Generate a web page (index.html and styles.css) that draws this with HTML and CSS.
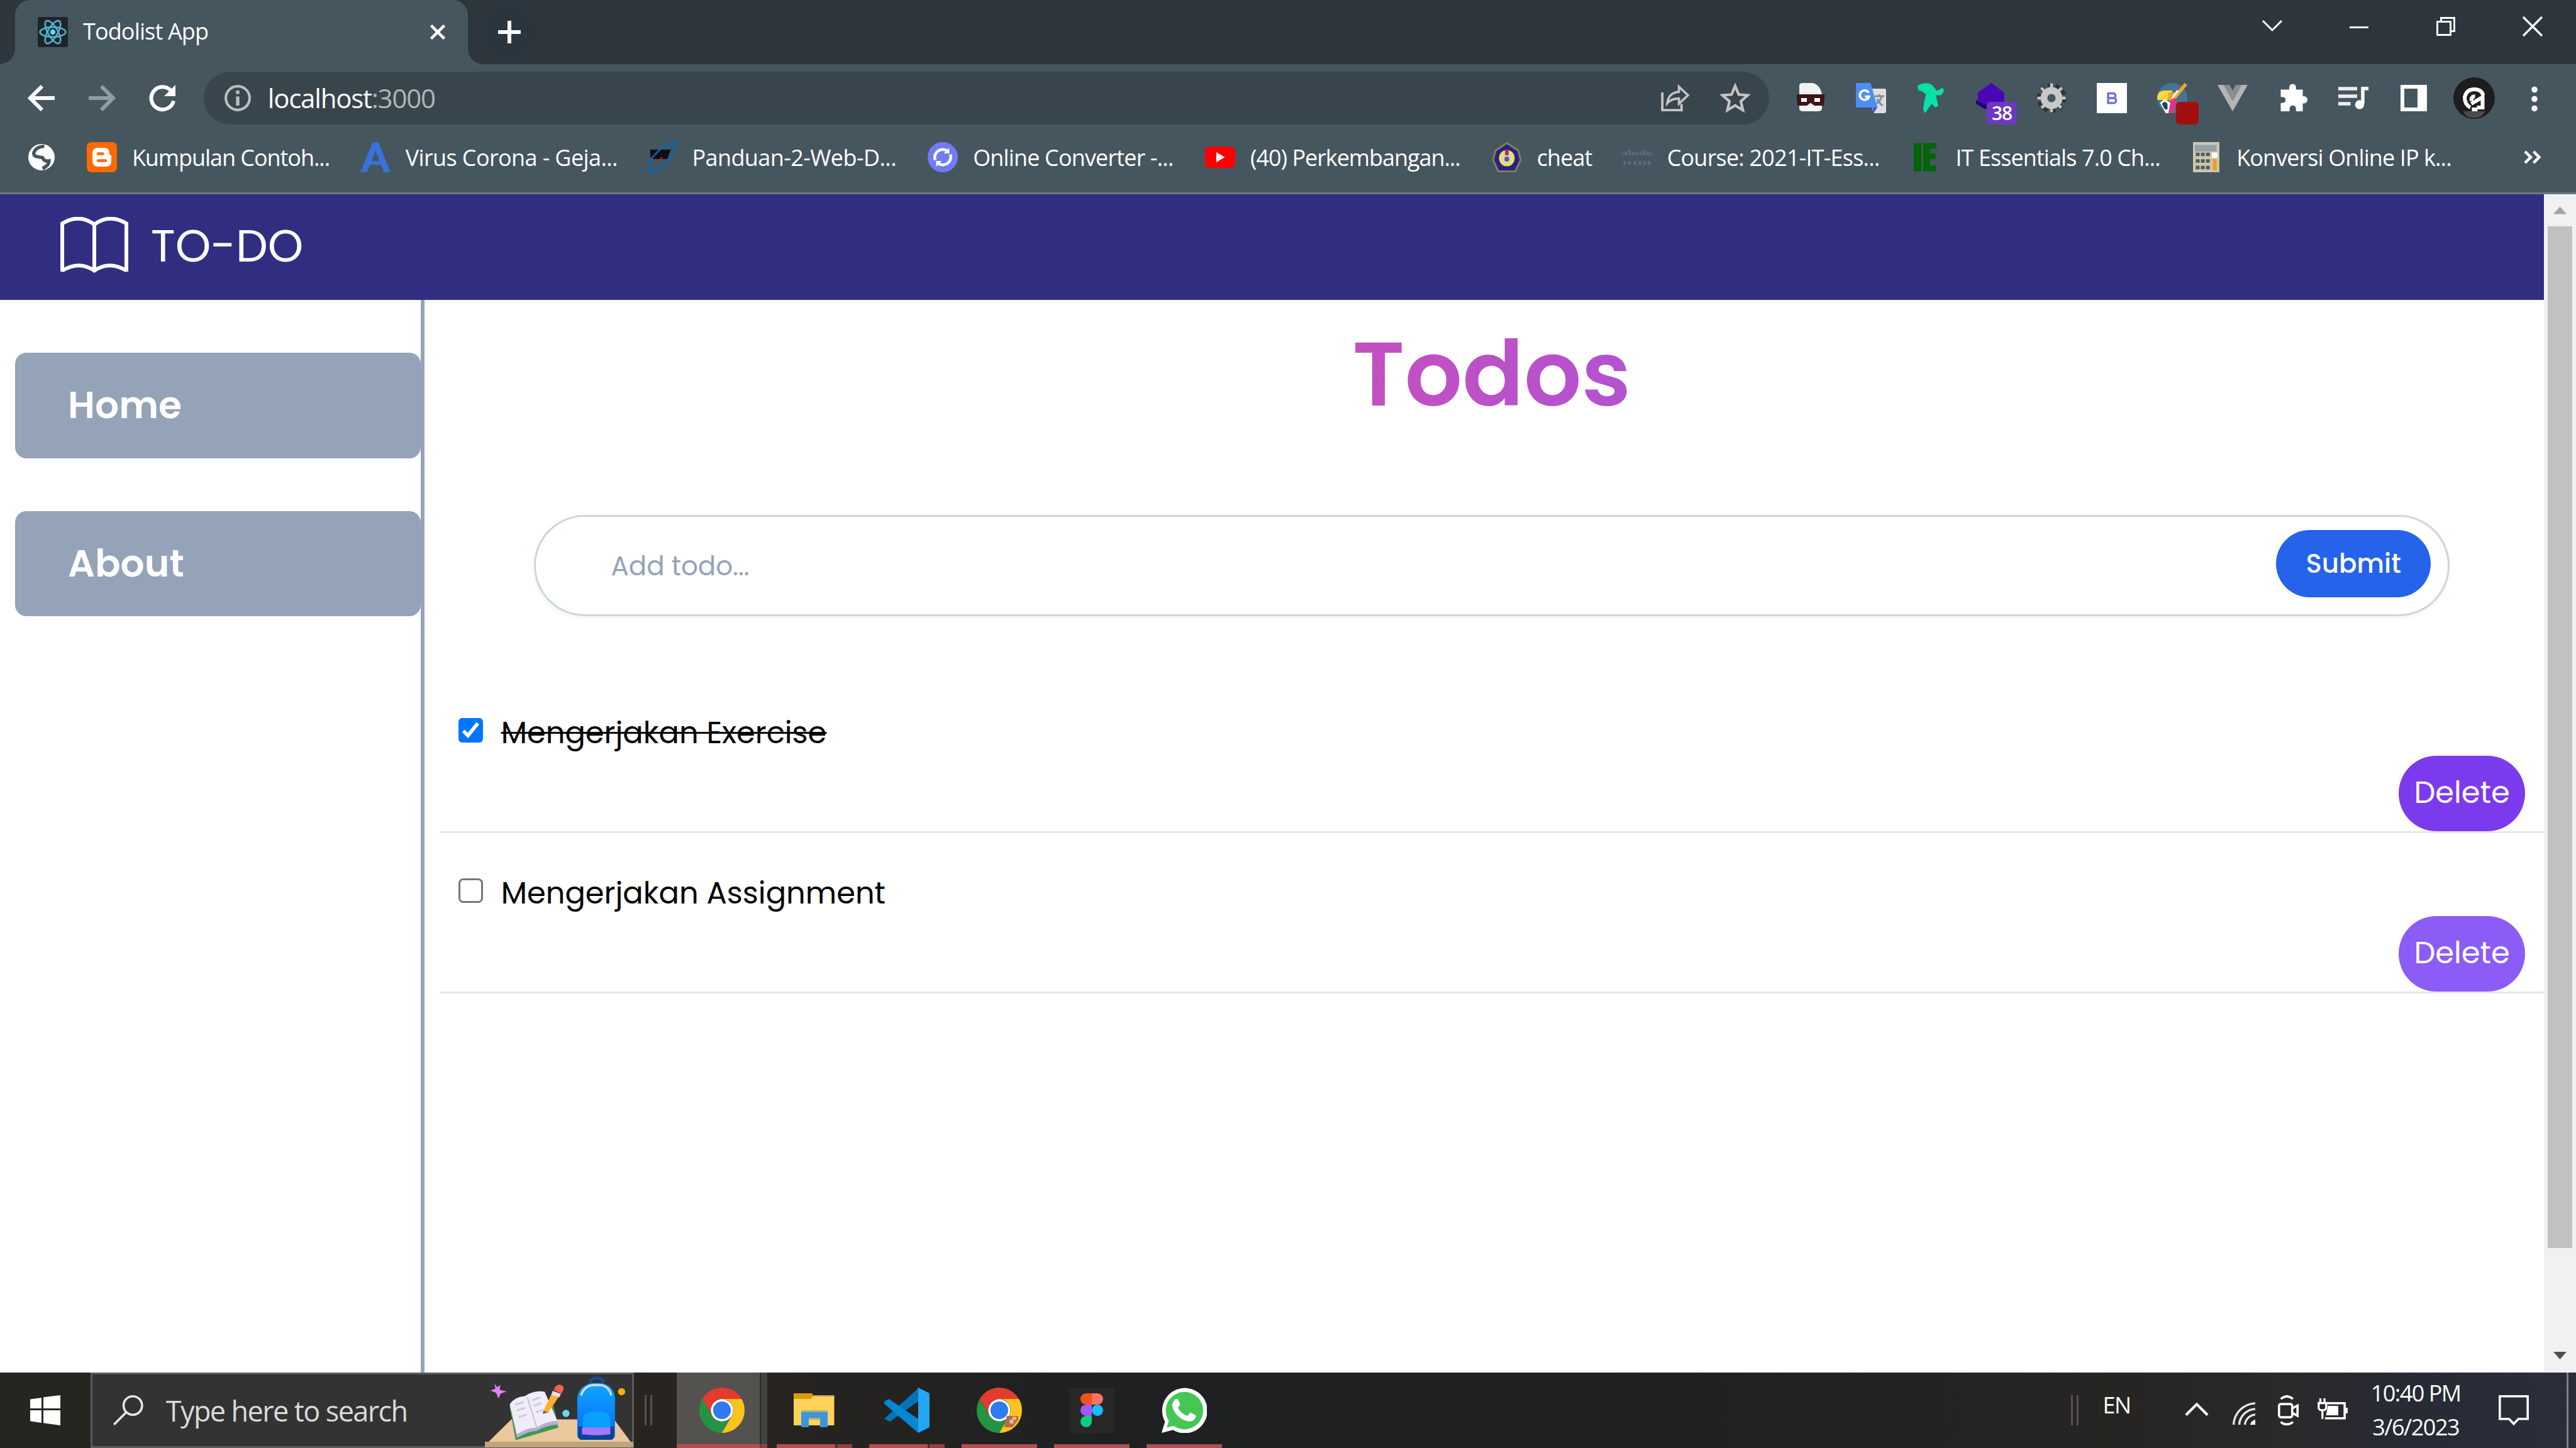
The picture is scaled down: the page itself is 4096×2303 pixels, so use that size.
FILE: index.html
```html
<!DOCTYPE html>
<html lang="en">
<head>
<meta charset="utf-8">
<title>Todolist App</title>
<link rel="stylesheet" href="styles.css">
</head>
<body>
<header class="tabstrip">
  <div class="tab">
    <svg class="i16" viewBox="0 0 16 16"><rect width="16" height="16" rx=".8" fill="#20232a"/><g fill="none" stroke="#4fb3cc" stroke-width=".9"><ellipse cx="8" cy="8" rx="6.8" ry="2.6"/><ellipse cx="8" cy="8" rx="6.8" ry="2.6" transform="rotate(60 8 8)"/><ellipse cx="8" cy="8" rx="6.8" ry="2.6" transform="rotate(120 8 8)"/></g><circle cx="8" cy="8" r="1.4" fill="#61dafb"/></svg>
    <span class="tab-title">Todolist App</span>
    <svg class="tab-close" viewBox="0 0 8 8"><path d="M.5.5l7 7M7.5.5l-7 7" stroke="#fff" stroke-width="1.5"/></svg>
  </div>
  <svg class="new-tab" viewBox="0 0 28 28"><circle cx="14" cy="14" r="14" fill="#2a353d"/><path d="M14 8v12M8 14h12" stroke="#fff" stroke-width="2"/></svg>
  <div class="window-controls">
    <svg class="i16" viewBox="0 0 16 16"><path d="M3 5l5 5 5-5" fill="none" stroke="#fff"/></svg>
    <svg class="i16" viewBox="0 0 16 16"><path d="M3 8.500h10" stroke="#fff"/></svg>
    <svg class="i16" viewBox="0 0 16 16"><path d="M5.500 5V3.500h7v7H11M3.500 5.500h7v7h-7z" fill="none" stroke="#fff"/></svg>
    <svg class="i16" viewBox="0 0 16 16"><path d="M3 3l10 10M13 3L3 13" stroke="#fff" stroke-width="1.100"/></svg>
  </div>
</header>

<div class="toolbar">
  <div class="nav">
    <svg class="i16" viewBox="0 0 16 16"><path d="M15 8H2.500M8.300 1.700L2 8l6.300 6.300" fill="none" stroke="#fff" stroke-width="2"/></svg>
    <svg class="i16" viewBox="0 0 16 16"><path d="M1 8h12.500M7.700 1.700L14 8l-6.300 6.300" fill="none" stroke="#929ca1" stroke-width="2"/></svg>
    <svg class="i16" viewBox="0 0 16 16"><path d="M14 9.500A6 6 0 1 1 12.600 4" fill="none" stroke="#fff" stroke-width="2"/><path d="M15 1v6H9z" fill="#fff"/></svg>
  </div>
  <div class="omnibox">
    <svg class="i16" viewBox="0 0 16 16"><circle cx="8" cy="8" r="6.300" fill="none" stroke="#b9bec1" stroke-width="1.400"/><path d="M8 7.200V12M8 4v1.800" stroke="#b9bec1" stroke-width="1.800"/></svg>
    <div class="url">localhost<span class="port">:3000</span></div>
    <svg class="i16 share" viewBox="0 0 16 16"><path d="M1.400 5v9.400h10.200v-3.200" fill="none" stroke="#c4c4c4" stroke-width="1.300"/><path d="M4 10.800c.4-3.700 2.600-5.900 6.200-6.100V2L15 6.500 10.200 11V8.200c-2.800 0-4.700.8-6.200 2.600z" fill="none" stroke="#c4c4c4" stroke-width="1.200"/></svg>
    <svg class="i16" viewBox="0 0 16 16"><path d="M8 1.600l1.900 4.500 4.800.4-3.700 3.200 1.100 4.700L8 11.900l-4.100 2.500L5 9.700 1.300 6.500l4.800-.4z" fill="none" stroke="#c4c4c4" stroke-width="1.400"/></svg>
  </div>
  <div class="extensions">
    <svg class="i16" viewBox="0 0 16 16"><path d="M2 1.500Q2 0 4 0h5q4 .8 5 6v7.500q0 1.500-2 1.500H4q-2 0-2-1.500z" fill="#f2f2f4"/><path d="M.5 6h15l-.5 6h-5L8 10.500 6 12H1z" fill="#3d1518"/><path d="M3 8h3v2H3zM10 8h3v2h-3z" fill="#fff"/></svg>
    <svg class="i16" viewBox="0 0 16 16"><path d="M6 3h9.200q.8 0 .8.800V15.200q0 .8-.8.800H9.500z" fill="#dedede"/><path d="M9 12.500h2.600L9.400 16z" fill="#3a4fc4"/><path d="M.8 0h7l3.700 13H.8Q0 13 0 12.200V.8Q0 0 .8 0z" fill="#4f8df5"/><path d="M6.800 5.200a2.500 2.500 0 1 0 .2 2H4.800" fill="none" stroke="#fff" stroke-width="1.200"/><path d="M10 7h5M12.500 6v1M13.700 7q-.8 3-3 4M11.200 8.500q1 2 3 3.500" fill="none" stroke="#7a929b"/></svg>
    <svg class="i16" viewBox="0 0 16 16"><path d="M1 1.500Q5-1 8.500.8L11.300 4.200l3.200-1.700.5 1.800-1.500 2.200h-2.800l.6 2.500.7 3-1.500 1L8.500 11 5 16 4 14l.5-4L5.500 6 3.500 4.500 1.500 3.800z" fill="#07e2a7"/></svg>
    <div class="ext-badged">
      <svg class="i16" viewBox="0 0 16 16"><path d="M8 0l7 5v5l-7 4-7-4V5z" fill="#4a06b5"/><path d="M0 9l8 4v1L4 13.500 0 11z" fill="#21006e"/></svg>
      <span class="badge">38</span>
    </div>
    <svg class="i16" viewBox="0 0 16 16"><circle cx="8" cy="8" r="6.700" fill="none" stroke="#303234" stroke-width="2.400" stroke-dasharray="2.200 2"/><circle cx="8" cy="8" r="4" fill="none" stroke="#c8c8c8" stroke-width="3.600"/><path d="M8 .2v3M2.500 2.500l2 2M13.500 2.500l-2 2M.5 8h3M12.500 8h3M2.800 13.200l2-2M13.200 13.200l-2-2M8 12.500v3" stroke="#c5c5c5" stroke-width="1.500"/></svg>
    <svg class="i16" viewBox="0 0 16 16"><rect width="16" height="16" fill="#fff"/><path d="M6 5.500h2.700a1.200 1.200 0 0 1 0 2.500H6h3a1.300 1.300 0 0 1 0 2.600H6z" fill="none" stroke="#6f73cc" stroke-width="1.100"/></svg>
    <div class="ext-badged">
      <svg class="i16" viewBox="0 0 16 16"><circle cx="8" cy="8" r="8" fill="#437596"/><path d="M0 9Q-.2 4 4 4h4v5z" fill="#ffd83a"/><path d="M6 5h4L8 10 5.500 8.500z" fill="#ff9d26"/><path d="M14.500 0l1.500 1L9.800 8.500 8 7.500z" fill="#f9a62c"/><path d="M11 4L8 8" stroke="#fff"/><path d="M1.500 10.500L4 8.500l3 2L6 16H4.500z" fill="#fff"/><path d="M2.500 11q1.500-2 3 0v3H4z" fill="#24475f"/><path d="M7.500 9l3-1-2 8H6z" fill="#ec2f8c"/></svg>
      <span class="badge badge-red"></span>
    </div>
    <svg class="i16" viewBox="0 0 16 16"><path d="M0 1h3.300L8 9.500 12.700 1H16L8 15z" fill="#b4b4b4"/><path d="M3.300 1h3L8 4l1.700-3h3L8 9.500z" fill="#8b8d8e"/></svg>
    <svg class="i16" viewBox="0 0 16 16"><path d="M1.500 3.500H6V2.300a1.800 1.800 0 0 1 3.600 0v1.200h3.600V7h.6a1.900 1.900 0 0 1 0 3.800h-.6V15H9.600v-1.400a1.700 1.700 0 0 0-3.400 0V15H1.500v-4.400h1a1.600 1.600 0 0 0 0-3.200h-1z" fill="#fff"/></svg>
    <svg class="i16" viewBox="0 0 16 16"><path d="M0 3h10M0 7h10M0 11h6.500" stroke="#eee" stroke-width="1.800"/><path d="M13 2v9M12.200 2.900H16" stroke="#fff" stroke-width="1.800"/><circle cx="11.300" cy="11.500" r="2.400" fill="#fff"/></svg>
    <svg class="i16" viewBox="0 0 16 16"><path d="M1 1h14v14H1zM3 3v10h7V3z" fill="#fff" fill-rule="evenodd"/></svg>
    <svg class="i22" viewBox="0 0 22 22"><circle cx="11" cy="11" r="11" fill="#1d1d1f"/><path d="M5 18h12l-2 2.500q-4 2-8 0z" fill="#4b4b4c"/><path d="M15.800 9.500Q15 6.300 11 6.300T6 10.500q0 4 3 5.500M9.500 12.500q0-2.500 2-2.500M9.500 14l6-3.500v5.500h-3M9.800 17h3" fill="none" stroke="#fff" stroke-width="2"/></svg>
    <svg class="i16" viewBox="0 0 16 16"><g fill="#fff"><circle cx="8" cy="3.500" r="1.600"/><circle cx="8" cy="8.500" r="1.600"/><circle cx="8" cy="13.500" r="1.600"/></g></svg>
  </div>
</div>

<nav class="bookmarks">
  <div class="bm bm-globe"><svg class="i16" viewBox="0 0 16 16"><circle cx="8" cy="8" r="7" fill="#fff"/><path d="M9.500 2.200Q5 2.500 4 5.500q-.5 2 2 2.300l2.500.4q1 2.300 3.500 1.800 0 2.500-3.500 4" fill="none" stroke="#45565f" stroke-width="1.800"/></svg></div>
  <div class="bm bm-1"><svg class="i16" viewBox="0 0 16 16"><rect width="16" height="16" rx="2.500" fill="#ff6a00"/><path d="M6 3h3q3 0 3 3 0 1 1 1v3q0 3-3 3H6q-3 0-3-3V6q0-3 3-3z" fill="#fff"/><path d="M6 6.200h2.500M6 9.800h4" stroke="#ff6a00" stroke-width="1.500" stroke-linecap="round"/></svg><span>Kumpulan Contoh...</span></div>
  <div class="bm bm-2"><svg class="i16" viewBox="0 0 16 16"><path d="M6.500 0h3L16 16h-3.500L11 12H5l-1.500 4H0zM8 4.500L6 10h4z" fill="#3871d8" fill-rule="evenodd"/></svg><span>Virus Corona - Geja...</span></div>
  <div class="bm bm-3"><svg class="i16" viewBox="0 0 16 16"><path d="M2 4h11l-2 5H2z" fill="#0b1013"/><path d="M2 8h1.500v1H2zM7 8h1.500v1H7z" fill="#c00"/><path d="M2 16C-3 12 9 0 16 .3 17 5 7 16 2 15.500" fill="none" stroke="#0868b5" stroke-width=".9"/><path d="M12 1.500L15.500.3M1 15l2 .5" stroke="#0868b5" stroke-width="1.500"/></svg><span>Panduan-2-Web-D...</span></div>
  <div class="bm bm-4"><svg class="i16" viewBox="0 0 16 16"><circle cx="8" cy="8" r="8" fill="#727bf5"/><path d="M4 9.500A4.200 4.200 0 0 1 10.800 5M12 6.500A4.200 4.200 0 0 1 5.200 11" fill="none" stroke="#fff" stroke-width="1.500"/><path d="M11.500 3v3h-3zM4.500 13v-3h3z" fill="#fff"/></svg><span>Online Converter -...</span></div>
  <div class="bm bm-5"><svg class="i16" viewBox="0 0 16 16"><rect y="2.300" width="16" height="11.400" rx="2.500" fill="#f00"/><path d="M6 5.300v5.400L10.500 8z" fill="#fff"/></svg><span>(40) Perkembangan...</span></div>
  <div class="bm bm-6"><svg class="i16" viewBox="0 0 16 16"><path d="M8 .5L14 4.500l1.300 5L12.500 15.500h-9L.7 9.500 2 4.500z" fill="#29208c" stroke="#7f8055"/><ellipse cx="8" cy="8.500" rx="3.500" ry="3.700" fill="#d5d2dc" stroke="#efe839" stroke-width="1.300"/><path d="M7 4h2v3H7z" fill="#a93960"/><circle cx="8" cy="9" r="1.300" fill="#5d6455"/></svg><span>cheat</span></div>
  <div class="bm bm-7"><svg class="i16" viewBox="0 0 16 16"><path d="M0 7V5.500M2 7V5M4 7V4M6 7V5M8 7V5.500M10 7V5M12 7V4M14 7V5M16 7V5.500M1.500 10v2M4 10v2M7 10v2M9.500 10v2M12 10v2M14.500 10v2" stroke="#5d6a76" stroke-width="1.500"/></svg><span>Course: 2021-IT-Ess...</span></div>
  <div class="bm bm-8"><svg class="i16" viewBox="0 0 16 16"><path d="M2 .5h4v15H2zM7 .5h7v3h-3.500V6h3v3h-3v3.500H14v3H7z" fill="#026506"/></svg><span>IT Essentials 7.0 Ch...</span></div>
  <div class="bm bm-9"><svg class="i16" viewBox="0 0 16 16"><rect x="1" width="14" height="16" fill="#c9c6b3"/><path d="M2 1.500h11.500v3.500H2z" fill="#95a3a8"/><path d="M11 5.500h3v3h-3z" fill="#fff"/><path d="M2.500 6.500h8M2.500 10h8M2.500 13.500h8" stroke="#55584e" stroke-width="1.800" stroke-dasharray="2 .7"/><path d="M11.500 9h2v6h-2z" fill="#f89b16"/></svg><span>Konversi Online IP k...</span></div>
  <svg class="i16 more" viewBox="0 0 16 16"><path d="M4 5l3 3-3 3M8.500 5l3 3-3 3" fill="none" stroke="#fff" stroke-width="1.500"/></svg>
</nav>

<div class="viewport">
  <div class="app">
    <header class="app-header">
      <svg class="book" viewBox="0 0 36 30"><path d="M1 29V3.500Q10-2 18 4q8-6 17-.5V29M18 4v25M1 28.500q9-5.500 17 0 8-5.500 17 0" fill="none" stroke="#fff" stroke-width="2"/></svg>
      <span class="brand">TO-DO</span>
    </header>
    <div class="app-body">
      <aside class="sidebar">
        <a class="side-link">Home</a>
        <a class="side-link about">About</a>
      </aside>
      <main class="content">
        <h1 class="title">Todos</h1>
        <form class="todo-form">
          <span class="placeholder">Add todo...</span>
          <span class="submit">Submit</span>
        </form>
        <ul class="todos">
          <li class="todo">
            <svg class="check" viewBox="0 0 13 13"><rect width="13" height="13" rx="2" fill="#0075ff"/><path d="M2.600 6.800L5 9.300l5.300-6.500" fill="none" stroke="#fff" stroke-width="1.900"/></svg>
            <span class="todo-text done">Mengerjakan Exercise</span>
            <span class="delete hover">Delete</span>
          </li>
          <li class="todo">
            <svg class="check" viewBox="0 0 13 13"><rect x=".5" y=".5" width="12" height="12" rx="2" fill="#fff" stroke="#767676"/></svg>
            <span class="todo-text">Mengerjakan Assignment</span>
            <span class="delete">Delete</span>
          </li>
        </ul>
      </main>
    </div>
  </div>
  <div class="scrollbar">
    <svg class="arrow" viewBox="0 0 17 17"><path d="M5 10.500L8.500 6.500l3.500 4z" fill="#a3a3a3"/></svg>
    <div class="thumb"></div>
    <svg class="arrow" viewBox="0 0 17 17"><path d="M5 6h7l-3.500 4z" fill="#505050"/></svg>
  </div>
</div>

<footer class="taskbar">
  <div class="start"><svg class="i16" viewBox="0 0 16 16"><path d="M0 2.200L6 1.300V7H0zM7 1.100L16 0v7H7zM0 8h6v6.700L0 13.800zM7 8h9v8l-9-1.200z" fill="#fff"/></svg></div>
  <div class="search">
    <svg class="i16" viewBox="0 0 16 16"><circle cx="10.400" cy="5.500" r="4.900" fill="none" stroke="#e6e6e6" stroke-width="1.200"/><path d="M6.800 9.200L.4 15.600" stroke="#e6e6e6" stroke-width="1.200"/></svg>
    <span class="search-text">Type here to search</span>
    <svg class="art" viewBox="257 729 79 39">
      <defs><linearGradient id="bag" x1="0" y1="0" x2="0" y2="1"><stop offset="0" stop-color="#11a8ff"/><stop offset="1" stop-color="#0464fa"/></linearGradient></defs>
      <path d="M258 766l13-12.800h54.500L335 766z" fill="#ebc79c"/><path d="M257 765h79v3h-79z" fill="#c3a37b"/>
      <path d="M270 746l3.300 18.200L296 757.500 293 744z" fill="#3a9a52"/>
      <path d="M270.200 745.500q3-4 8-4.200 5-3.300 10.500-2.300L296 756q-6 0-11.500 3.300-5 .3-10.500 3.700z" fill="#b7add3"/>
      <path d="M270.200 745q3-4 8-4.200 5-3.300 10.500-2.300L295.500 754q-6 0-11 3.500-5 0-10.500 3.500z" fill="#f0edf8"/>
      <path d="M279.500 741.500l5 16" stroke="#cdc5df" stroke-width=".8"/><path d="M273 745.500l4.500-1.500M274 748.500l4.500-1.500M274.800 752l4.500-1.500M282 743l4.500-1.500M283 746l4-1.500M284 749.500l4-1.500" stroke="#cfcad9" stroke-width="1"/>
      <path d="M292.200 740l4 1.200-5.500 8.200-2.700-.7z" fill="#ffb02e"/><path d="M288 748.700l2.700.7-3 .9z" fill="#804a50"/><path d="M293 738l4.300 1.700-.8 1.700-4.300-1.200z" fill="#e9ddea"/><path d="M293.500 737.500q1.500-3.500 4-2.500 2.500 1.200 0 4.600z" fill="#f8604e"/>
      <path d="M262 734l1.500 2.200 1.700-1.400-.4 2.600 3.700 1-3.100 1-1.200 2.700-1.200-2.900-3-1.400 2.600-.9z" fill="#e580ff"/>
      <circle cx="300" cy="750" r="1.900" fill="#6fd6e5"/><circle cx="329.500" cy="738.500" r="1.900" fill="#fcb100"/>
      <path d="M313 735v-2.500q3.300-2.600 6.600 0v2.500" fill="none" stroke="#174c9e" stroke-width="1.500"/>
      <path d="M306 742q1-8 10.200-8.200Q325.500 734 326 742v19q0 3-3 3h-14q-3 0-3-3z" fill="url(#bag)"/>
      <path d="M308 740.500q1.500-4.700 6-5.500h4.500q4.500.8 5.500 5.500" fill="none" stroke="#d7d8f8" stroke-width="1.100"/>
      <path d="M306.500 757h19v5q0 2-2 2h-15q-2 0-2-2z" fill="#0d4297"/><path d="M309 758.500V753q0-4 7.300-4t7.300 4v5.500z" fill="#0aa0ff"/><path d="M308.500 757.500h15v3.500q-7.500 1.200-15 0z" fill="#a878fb"/>
    </svg>
  </div>
  <div class="grip grip-left"></div>
  <div class="apps">
    <div class="task active"><svg class="i24" viewBox="0 0 24 24"><path d="M12 6h10.400A12 12 0 0 0 1.600 6l5.200 9A6 6 0 0 1 12 6z" fill="#e33b2e"/><path d="M6.800 15L1.600 6A12 12 0 0 0 12 24l5.200-9A6 6 0 0 1 6.800 15z" fill="#259343"/><path d="M17.200 15L12 24A12 12 0 0 0 22.400 6H12a6 6 0 0 1 5.200 9z" fill="#fcc31e"/><circle cx="12" cy="12" r="5.900" fill="#fff"/><circle cx="12" cy="12" r="4.700" fill="#2d7bee"/></svg></div>
    <div class="task grouped"><svg class="i24" viewBox="0 0 24 24"><path d="M1 3h10v4H1z" fill="#dd9b00"/><path d="M11 4h11.500v2H11z" fill="#b9a363"/><path d="M1 6h9l1.300-1.300H22.500V20H1z" fill="#ffd35b"/><path d="M5 12h14v9h-4v-5H9v5H5z" fill="#3b95de"/><path d="M5 12h14v1H5zM9 16h6v1H9z" fill="#b6ad6d"/></svg></div>
    <div class="task grouped"><svg class="i24" viewBox="0 0 24 24"><path d="M0 16.500L17 1.300 18 0l1 6.500L3 18z" fill="#0474b8"/><path d="M0 7.300L2.500 6 18.500 17 18 24 0 8.500z" fill="#0687d3"/><path d="M18 0l6 3v18l-6 3z" fill="#26a6f2"/></svg></div>
    <div class="task"><svg class="i24" viewBox="0 0 24 24"><path d="M12 6h10.400A12 12 0 0 0 1.600 6l5.200 9A6 6 0 0 1 12 6z" fill="#e33b2e"/><path d="M6.800 15L1.600 6A12 12 0 0 0 12 24l5.200-9A6 6 0 0 1 6.800 15z" fill="#259343"/><path d="M17.200 15L12 24A12 12 0 0 0 22.400 6H12a6 6 0 0 1 5.200 9z" fill="#fcc31e"/><circle cx="12" cy="12" r="5.900" fill="#fff"/><circle cx="12" cy="12" r="4.700" fill="#2d7bee"/><path d="M16 15h6v2l-3 4h-4.500z" fill="#b56b45"/><path d="M17.500 17h2v2h-2zM19 15.500h2v1.500h-2z" fill="#eebb92"/></svg></div>
    <div class="task"><svg class="i24" viewBox="0 0 24 24"><rect width="24" height="24" rx="1" fill="#282828"/><path d="M12 3H9a3 3 0 0 0 0 6h3z" fill="#f4511e"/><path d="M12 3h3a3 3 0 0 1 0 6h-3z" fill="#ff7262"/><path d="M12 9H9a3 3 0 0 0 0 6h3z" fill="#a259ff"/><circle cx="15" cy="12" r="3" fill="#1abcfe"/><path d="M12 15H9a3 3 0 1 0 3 3z" fill="#0acf83"/></svg></div>
    <div class="task"><svg class="i24" viewBox="0 0 24 24"><path d="M0 24l1.800-6A12 12 0 1 1 6 22.400z" fill="#fff"/><path d="M2.800 21.200l1-3.700A9.900 9.900 0 1 1 6.500 20.300z" fill="#45c655"/><path d="M7.300 6.200c.8-.5 1.400-.3 1.700.5l.9 2.200-1.200 1.700c1.200 2.300 2.700 3.600 5 4.400l1.500-1.800 2.700 1.300c.5.400.3 1.700-.5 2.400-1.300 1.200-3.200 1.300-5.300.4C9 16 6.800 13.500 5.900 10.700c-.5-1.700 0-3.500 1.400-4.500z" fill="#fff"/></svg></div>
  </div>
  <div class="grip grip-right"></div>
  <span class="lang">EN</span>
  <svg class="i16 chevron" viewBox="0 0 16 16"><path d="M2.300 11.500L8 5.800l5.700 5.700" fill="none" stroke="#fff" stroke-width="1.400"/></svg>
  <svg class="i16 wifi" viewBox="0 0 16 16"><g fill="none" stroke="#e8e8e8" stroke-width="1.100"><path d="M2.500 15A12 12 0 0 1 14 3.600M5.500 15A9 9 0 0 1 14 6.600M8.500 15A6 6 0 0 1 14 9.600"/></g><path d="M11.300 15a3.500 3.500 0 0 1 2.700-2.700V15z" fill="#fff"/></svg>
  <svg class="i16 meet" viewBox="0 0 16 16"><g fill="none" stroke="#fff" stroke-width="1.200"><rect x="2.600" y="4.700" width="7" height="7" rx="1"/><path d="M9.600 7l2.800-1.500v5.400L9.600 9.400M3.500 2Q6.700-.8 10 2M3.500 14.200q3.200 2.600 6.500 0"/></g></svg>
  <svg class="i16 battery" viewBox="0 0 16 16"><path d="M5 4.600h9.400v8H4" fill="none" stroke="#fff" stroke-width="1.200"/><path d="M15 7h1v3h-1zM5.500 6H11v5H4.500z" fill="#fff"/><path d="M1.500 2v2.500M3.700 2v2.500M.6 4.500h4v2.300q0 1.500-2 1.500t-2-1.500zM2.600 8.500V13" fill="none" stroke="#fff" stroke-width="1.100"/></svg>
  <div class="clock"><span class="time">10:40 PM</span><span class="date">3/6/2023</span></div>
  <svg class="i16 notif" viewBox="0 0 16 16"><path d="M.6.600h14.800v12H10.500L8 15.200 5.500 12.600H.6z" fill="none" stroke="#fff" stroke-width="1.200"/></svg>
  <div class="peek"></div>
</footer>
</body>
</html>
```
FILE: styles.css
```css
/* 1rem is ten design pixels on a 1366px wide desktop */
html { font-size: calc(1000vw / 1366); }
* { box-sizing: border-box; }
body {
  margin: 0;
  height: 100vh;
  overflow: hidden;
  display: flex;
  flex-direction: column;
  background: #fff;
  font-family: "Open Sans", "Noto Sans", sans-serif;
  font-size: 1.2rem;
  color: #fff;
  white-space: nowrap;
}
svg { display: block; flex: none; }
.i16 { width: 1.6rem; height: 1.6rem; }
.i22 { width: 2.2rem; height: 2.2rem; }
.i24 { width: 2.4rem; height: 2.4rem; }

/* tab strip */
.tabstrip { flex: none; height: 3.4rem; display: flex; align-items: center; background: #2c363c; }
.tab {
  position: relative;
  width: 24rem;
  height: 3.4rem;
  margin-left: 0.8rem;
  padding: 0 1.2rem;
  display: flex;
  align-items: center;
  background: #45565f;
  border-radius: 0.8rem 0.8rem 0 0;
}
.tab::before, .tab::after {
  content: "";
  position: absolute;
  bottom: 0;
  width: 0.8rem;
  height: 0.8rem;
}
.tab::before { left: -0.8rem; background: radial-gradient(circle at 0 0, transparent 0.78rem, #45565f 0.8rem); }
.tab::after { right: -0.8rem; background: radial-gradient(circle at 100% 0, transparent 0.78rem, #45565f 0.8rem); }
.tab-title { flex: 1; margin-left: 0.8rem; line-height: 1.6rem; margin-top: -0.06rem; letter-spacing: -0.028rem; }
.tab-close { width: 0.8rem; height: 0.8rem; }
.new-tab { width: 2.8rem; height: 2.8rem; margin-left: 0.8rem; }
.window-controls { margin-left: auto; display: grid; grid-template-columns: repeat(4, 4.6rem); justify-items: center; align-self: flex-start; padding-top: 0.6rem; }

/* toolbar */
.toolbar { flex: none; height: 3.6rem; display: flex; align-items: center; background: #45565f; }
.nav { display: grid; grid-template-columns: repeat(3, 3.2rem); justify-items: center; margin-left: 0.6rem; }
.omnibox {
  width: 83rem;
  height: 2.8rem;
  margin-left: 0.6rem;
  padding: 0 1rem;
  display: flex;
  align-items: center;
  border-radius: 1.4rem;
  background: #38454c;
}
.url { flex: 1; margin-left: 0.8rem; font-size: 1.4rem; letter-spacing: -0.04rem; }
.port { color: #b0b5b8; }
.share { margin-right: 1.6rem; }
.extensions { margin-left: 0.6rem; display: grid; grid-template-columns: repeat(13, 3.2rem); justify-items: center; align-items: center; }
.ext-badged { position: relative; }
.badge {
  position: absolute;
  left: 0.55rem;
  top: 1rem;
  width: 1.6rem;
  height: 1.2rem;
  border-radius: 0.2rem;
  background: #6b39c1;
  font-size: 1rem;
  line-height: 1.2rem;
  text-align: center;
  font-weight: 600;
  letter-spacing: -0.04rem;
}
.badge-red { left: 1rem; width: 1.2rem; background: #a30f0f; }

/* bookmarks bar */
.bookmarks { flex: none; height: 3.3rem; padding: 0 1rem 0.5rem 1.4rem; display: flex; align-items: center; background: #45565f; border-bottom: 0.101rem solid #6d7b83; }
.bm { flex: none; display: flex; align-items: center; gap: 0.8rem; letter-spacing: -0.03rem; }
.bm-globe { width: 3.2rem; }
.bm-1 { width: 14.5rem; letter-spacing: -0.035rem; }
.bm-2 { width: 15.2rem; letter-spacing: -0.02rem; }
.bm-3 { width: 14.9rem; letter-spacing: -0.019rem; }
.bm-4 { width: 14.7rem; letter-spacing: -0.028rem; }
.bm-5 { width: 15.2rem; letter-spacing: -0.035rem; }
.bm-6 { width: 6.9rem; }
.bm-7 { width: 15.3rem; letter-spacing: -0.026rem; }
.bm-8 { width: 14.9rem; }
.bm-9 { width: 14rem; }
.more { margin-left: auto; margin-right: 0.5rem; }

/* page viewport */
.viewport { flex: 1; min-height: 0; display: flex; }
.app { flex: 1; display: flex; flex-direction: column; font-family: "Poppins", "Inter", sans-serif; background: #fff; }
.app-header { flex: none; height: 5.6rem; padding: 0 3.2rem 0; display: flex; align-items: center; gap: 1.2rem; background: #312e81; }
.book { width: 3.6rem; height: 3rem; margin-bottom: 0.2rem; }
.brand { font-size: 2.4rem; line-height: 3.2rem; margin-bottom: 0.14rem; }
.app-body { flex: 1; display: flex; min-height: 0; }
.sidebar { flex: none; width: 22.5rem; padding: 2.8rem 0 0 0.8rem; border-right: 0.201rem solid #94a3b8; display: flex; flex-direction: column; gap: 2.8rem; }
.side-link { height: 5.6rem; padding-left: 2.8rem; line-height: 5.6rem; border-radius: 0.6rem; background: #94a3b8; font-size: 2rem; font-weight: 600; }
.content { flex: 1; display: flex; flex-direction: column; color: #000; padding-left: 0.8rem; }
.title {
  align-self: center;
  margin: 1.55rem 0 0;
  font-size: 4.8rem;
  line-height: 4.8rem;
  height: 6rem;
  font-weight: 600;
  background: linear-gradient(90deg, #c450c0, #b352d0);
  background-clip: text;
  -webkit-background-clip: text;
  color: transparent;
}
.todo-form {
  width: 101.6rem;
  height: 5.4rem;
  margin: 3.85rem 0 0 5rem;
  padding: 0 0.9rem 0 4rem;
  display: flex;
  align-items: center;
  justify-content: space-between;
  border: 0.101rem solid #cbd5e1;
  border-radius: 2.7rem;
  box-shadow: 0 0.1rem 0.2rem rgba(0, 0, 0, 0.05);
}
.placeholder { font-size: 1.4rem; padding-top: 0.08rem; color: #94a3b8; }
.submit { width: 8.2rem; height: 3.6rem; margin-bottom: 0.2rem; line-height: 3.6rem; border-radius: 1.8rem; background: #2563eb; color: #fff; text-align: center; font-size: 1.4rem; font-weight: 500; }
.todos { list-style: none; margin: 3rem 0 0; padding: 0; }
.todo { height: 8.5rem; padding: 2.4rem 1rem 0; display: flex; align-items: flex-start; border-bottom: 0.101rem solid #e5e7eb; font-size: 1.6rem; }
.check { width: 1.3rem; height: 1.3rem; }
.todo-text { margin: -0.31rem 0 0 0.97rem; line-height: 2.2rem; }
.done { text-decoration: line-through; text-decoration-thickness: 0.1rem; }
.delete { align-self: flex-end; margin-left: auto; width: 6.7rem; height: 4rem; line-height: 3.95rem; border-radius: 2rem; text-align: center; background: #8b5cf6; color: #fff; }
.delete.hover { background: #7c3aed; }

.scrollbar { flex: none; width: 1.7rem; display: flex; flex-direction: column; align-items: center; background: #f1f1f1; }
.arrow { width: 1.7rem; height: 1.7rem; }
.thumb { width: 1.3rem; height: 54.2rem; margin-bottom: auto; background: #c1c1c1; }

/* taskbar */
.taskbar { flex: none; height: 4rem; display: flex; align-items: center; background: linear-gradient(90deg, #26251f 0, #26251f 4rem, #2a2420 34rem, #242321 46rem, #1e2022 60rem, #1e2022 85rem, #272522 112rem, #2a292c 122rem, #272b35 128rem, #292e38 100%); }
.start { width: 4.8rem; padding-left: 1.6rem; }
.search { width: 28.8rem; height: 4rem; padding-left: 1.1rem; display: flex; align-items: center; background: #333; border: 0.101rem solid #5b5b5b; }
.search-text { flex: 1; margin-left: 1.2rem; font-size: 1.5rem; letter-spacing: -0.053rem; color: #dadada; }
.art { width: 7.9rem; height: 3.9rem; margin-right: -0.1rem; }
.grip { width: 0.4rem; height: 1.6rem; border: 0.101rem solid #54514e; border-width: 0 0.101rem; }
.grip-left { margin-left: 0.6rem; }
.apps { margin-left: 1.3rem; display: flex; gap: 0.1rem; }
.task { position: relative; width: 4.8rem; height: 4rem; display: flex; align-items: center; justify-content: center; }
.task::after { content: ""; position: absolute; left: 0.4rem; right: 0.4rem; bottom: 0; height: 0.2rem; background: #b14f50; }
.task.grouped::after { background: linear-gradient(90deg, #b14f50 3.1rem, #4d2b2a 3.1rem, #4d2b2a 3.2rem, #8e4243 3.2rem); }
.task.active { background: linear-gradient(90deg, #54524f 4.4rem, #32302e 4.4rem, #32302e 4.5rem, #454341 4.5rem); }
.task.active::after { left: 0; right: 0; background: linear-gradient(90deg, #b14f50 4.4rem, #7a3a3b 4.4rem, #7a3a3b 4.5rem, #8e4243 4.5rem); }
.grip-right { margin-left: auto; }
.lang { width: 4.2rem; margin-left: 1.3rem; margin-top: -0.55rem; letter-spacing: -0.05rem; }
.chevron { margin-top: -0.2rem; }
.wifi { margin-left: 0.9rem; margin-top: 0.1rem; }
.meet { margin-left: 0.8rem; }
.battery { margin-left: 0.7rem; margin-top: -0.1rem; }
.clock { width: 4.8rem; margin-left: 1.2rem; display: flex; flex-direction: column; line-height: 1.8rem; align-items: center; letter-spacing: -0.05rem; }
.notif { margin-left: 2rem; }
.peek { align-self: stretch; width: 0.1rem; margin: 0 0.4rem 0 2rem; background: #7d8086; }
```
